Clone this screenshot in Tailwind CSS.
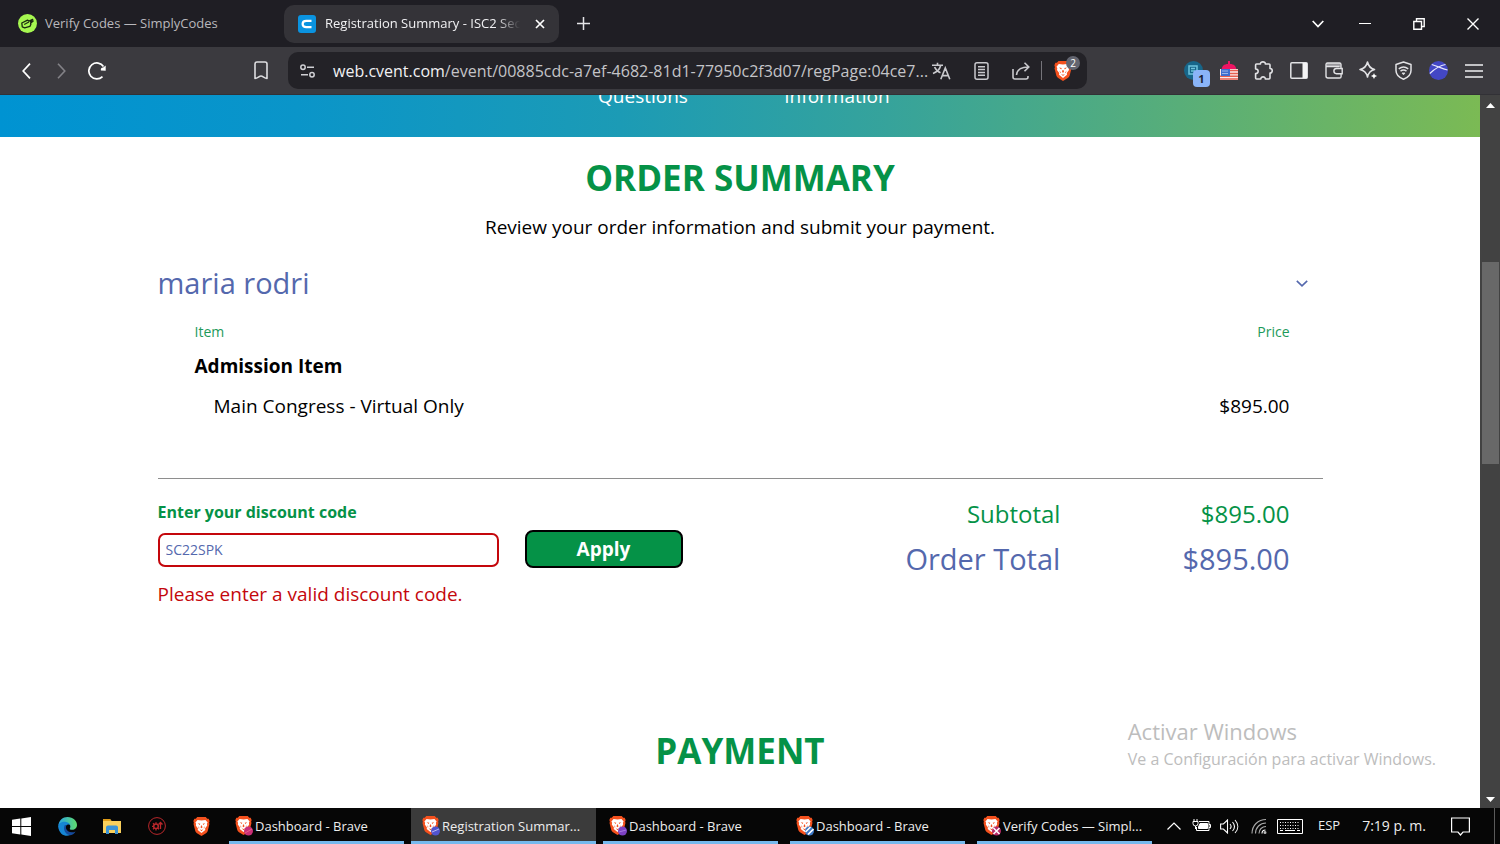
<!DOCTYPE html>
<html lang="en">
<head>
  <meta charset="UTF-8">
  <meta name="viewport" content="width=device-width, initial-scale=1.0">
  <title>Registration Summary - ISC2 Security Congress</title>
  <script src="https://cdn.jsdelivr.net/npm/@tailwindcss/browser@4"></script>
</head>
<body class="h-screen flex flex-col overflow-hidden bg-white font-['Open_Sans',sans-serif]">

  <!-- Shared icons -->
  <svg class="hidden">
    <symbol id="brave" viewBox="0 0 18 20">
      <path d="M4.500 0h9l1.600 1.800 1.500-.1 1 2.500-.6 2 .5 1-1.900 7.500c-.3 1-1 1.800-1.800 2.400L9 20l-4.800-2.900c-.8-.6-1.500-1.400-1.800-2.400L.5 7.200l.5-1-.6-2 1-2.500 1.500.1z" fill="#f4511e"/>
      <path d="M4.800 3 9 3.600l4.200-.6 2.300 2.700-.8 1.500.3 1.800-2.200 3 .2 1.800L9 17l-4-3.200.2-1.800L3 9l.3-1.800-.8-1.500z" fill="#fff"/>
      <path d="m5 6.500 2.700.6-.5 1.300zM13 6.500l-2.700.6.5 1.300zM8.500 9h1l.5 2-1 .8-1-.8zM5.500 9.500l1.300 2-.6.800zM12.500 9.500l-1.300 2 .6.800zM7 13l2 .8 2-.8-2 1.900z" fill="#f4511e"/>
    </symbol>
  </svg>

  <!-- Tabs -->
  <header class="h-[47px] shrink-0 bg-[#1f1e24] flex items-center text-[13px]">
    <a href="#" class="w-[284px] flex items-center gap-2 pl-[18px] text-[#b9b8bc]">
      <svg class="size-[19px]" viewBox="0 0 20 20">
        <circle cx="10" cy="10" r="10" fill="#a6f750"/>
        <path d="M4 9.500 10 6.500l1.500 1 4-1.800-2.300 2.500 2.800-.8-2.800 2.300.3 1.300-1 2-5.500 1.500-2.500-1z" fill="none" stroke="#1c2a12" stroke-width="1.400" stroke-linejoin="round"/>
        <path d="m6.500 11 5-2.500" stroke="#1c2a12" stroke-width="1.200"/>
      </svg>
      <span>Verify Codes — SimplyCodes</span>
    </a>
    <div class="w-[275px] h-[38px] rounded-[10px] bg-[#343338] flex items-center pl-[14px] pr-2 text-[#f1f1f3]">
      <svg class="size-[18px] shrink-0" viewBox="0 0 18 18">
        <rect width="18" height="18" rx="3" fill="#0a93e0"/>
        <path d="M13.500 5.800H8.200C6 5.800 4.600 7 4.600 9s1.400 3.200 3.600 3.200h5.300" fill="none" stroke="#fff" stroke-width="2.200"/>
      </svg>
      <span class="ml-[9px] w-[195px] overflow-hidden whitespace-nowrap [mask-image:linear-gradient(to_right,black_88%,transparent)]">Registration Summary - ISC2 Security</span>
      <button aria-label="Close tab" class="ml-auto size-[22px] flex items-center justify-center">
        <svg class="size-[10px]" viewBox="0 0 10 10"><path d="m1 1 8 8M9 1 1 9" stroke="#fff" stroke-width="1.700"/></svg>
      </button>
    </div>
    <button aria-label="New tab" class="ml-3 size-6 flex items-center justify-center">
      <svg class="size-[13px]" viewBox="0 0 13 13"><path d="M6.500 0v13M0 6.500h13" stroke="#e4e4e7" stroke-width="1.500"/></svg>
    </button>
    <div class="ml-auto flex items-center">
      <button aria-label="Search tabs" class="w-10 h-8 flex items-center justify-center">
        <svg class="w-3 h-2" viewBox="0 0 12 8"><path d="m.7 1 5.300 5.500L11.300 1" fill="none" stroke="#fff" stroke-width="1.700"/></svg>
      </button>
      <button aria-label="Minimize" class="w-[54px] h-8 flex items-center justify-center">
        <svg class="w-3 h-2" viewBox="0 0 12 8"><path d="M0 3.500h12" stroke="#fff"/></svg>
      </button>
      <button aria-label="Restore" class="w-[54px] h-8 flex items-center justify-center">
        <svg class="size-3" viewBox="0 0 12 12"><path d="M.8 3.500h7.700v7.700H.8zM3.500 3.500V.8h7.700v7.700H8.500" fill="none" stroke="#fff" stroke-width="1.400"/></svg>
      </button>
      <button aria-label="Close window" class="w-[54px] h-8 flex items-center justify-center">
        <svg class="size-3" viewBox="0 0 12 12"><path d="m.5.5 11 11m0-11-11 11" stroke="#fff" stroke-width="1.400"/></svg>
      </button>
    </div>
  </header>

  <!-- Toolbar -->
  <div class="h-12 shrink-0 bg-[#3b3a3f] border-b border-[#323136] flex items-center pl-[9px] pr-[9px]">
    <button aria-label="Back" class="w-[35px] h-8 flex items-center justify-center">
      <svg class="w-[9px] h-4" viewBox="0 0 9 16"><path d="M8 .7 1.200 8 8 15.300" fill="none" stroke="#fff" stroke-width="1.700"/></svg>
    </button>
    <button aria-label="Forward" class="w-[35px] h-8 flex items-center justify-center">
      <svg class="w-[9px] h-4" viewBox="0 0 9 16"><path d="M1 .7 7.800 8 1 15.300" fill="none" stroke="#838287" stroke-width="1.600"/></svg>
    </button>
    <button aria-label="Reload" class="w-[35px] h-8 flex items-center justify-center">
      <svg class="size-[18px]" viewBox="0 0 18 18"><path d="M15.500 4.500A8 8 0 1 0 14.500 14.600" fill="none" stroke="#fff" stroke-width="1.700"/><path d="M17.700 3.500v5.300l-4.800-.4c-.4-2 .6-3 2.300-2.900z" fill="#fff"/></svg>
    </button>
    <button aria-label="Bookmark this page" class="ml-[129px] w-[35px] h-8 flex items-center justify-center">
      <svg class="w-[14px] h-[19px]" viewBox="0 0 14 19"><path d="M1 3a2 2 0 0 1 2-2h8a2 2 0 0 1 2 2v14.500c-2.500-.2-4.200-2.500-6-2.500s-3.500 2.300-6 2.500z" fill="none" stroke="#dddde0" stroke-width="1.600" stroke-linejoin="round"/></svg>
    </button>

    <div class="ml-[10px] flex-1 max-w-[799px] h-[37px] rounded-[10px] bg-[#232227] flex items-center pl-3 pr-[6px] text-[#c4c4c8]">
      <button aria-label="Site information" class="shrink-0">
        <svg class="w-[15px] h-[14px]" viewBox="0 0 15 14" fill="none" stroke="#d0d0d4" stroke-width="1.500"><circle cx="3" cy="3.200" r="2.200"/><path d="M7 3.200h7M1 10.800h7"/><circle cx="12" cy="10.800" r="2.200"/></svg>
      </button>
      <a href="#" class="ml-[18px] flex-1 min-w-0 text-base whitespace-nowrap"><span class="text-[#f1f1f3]">web.cvent.com</span>/event/00885cdc-a7ef-4682-81d1-77950c2f3d07/regPage:04ce7...</a>
      <button aria-label="Translate" class="w-10 shrink-0 flex justify-center">
        <svg class="w-[19px] h-[18px]" viewBox="0 0 19 18" fill="none" stroke="#c9c9cd" stroke-width="1.600"><path d="M0 3.300h11M5.500.8v2.500M8.700 3.500C7.800 7 4.800 10 1 11.500M2.600 5C3.800 8 6 9.800 8.500 10.800M8.800 17.300 13.300 6l4.500 11.300M10.300 13.600h6"/></svg>
      </button>
      <button aria-label="Reader mode" class="w-10 shrink-0 flex justify-center">
        <svg class="w-[15px] h-[18px]" viewBox="0 0 15 18" fill="none" stroke="#c9c9cd" stroke-width="1.500"><rect x="1" y=".8" width="13" height="16.400" rx="2"/><path d="M4 4.800h7M4 7.600h7M4 10.400h7M4 13.200h7"/></svg>
      </button>
      <button aria-label="Share" class="w-10 shrink-0 flex justify-center">
        <svg class="w-[18px] h-[18px]" viewBox="0 0 18 18" fill="none" stroke="#c9c9cd" stroke-width="1.600"><path d="M1 7v8a2 2 0 0 0 2 2h11a2 2 0 0 0 2-2v-1M4.500 13c.4-5 3.500-8 12-8M12.500.8 16.800 5l-4.300 4.200"/></svg>
      </button>
      <span class="w-px shrink-0 h-[19px] bg-[#75747a]"></span>
      <button aria-label="Brave Shields" class="relative shrink-0 ml-3 w-[27px] h-[22px]">
        <svg class="w-[18px] h-[22px]"><use href="#brave"/></svg>
        <span class="absolute -top-1 left-3 size-[14px] rounded-full bg-[#636570] text-white text-[10px] leading-[14px] text-center">2</span>
      </button>
    </div>

    <!-- Extensions -->
    <div class="ml-auto flex items-center">
      <button aria-label="Reader extension" class="relative w-[35px] h-8 flex items-center justify-center">
        <svg class="size-[19px]" viewBox="0 0 19 19"><circle cx="9.500" cy="9.500" r="9.500" fill="#17668a"/><path d="M5 5h8v8H5zM7 7.500h4M7 10h4" fill="none" stroke="#6fc3dd" stroke-width="1.500"/></svg>
        <span class="absolute left-[17px] top-[15px] size-[17px] rounded-[4px] bg-[#8ab4f8] text-[#1b2333] text-[11px] font-bold leading-[17px] text-center">1</span>
      </button>
      <button aria-label="US proxy extension" class="w-[35px] h-8 flex items-center justify-center">
        <svg class="w-[18px] h-5" viewBox="0 0 18 20"><path d="M8 0h2v3c4 0 6 2 6.500 6h-15C2 5 4 3 8 3z" fill="#ee1463"/><path d="M0 8h18v11H0z" fill="#fbe9e9"/><path d="M0 18h18M9 9.500h9M9 12.500h9M0 15.300h18" stroke="#e6604f" stroke-width="1.400"/><path d="M1 8h9v7H1z" fill="#3f6fd0"/><path d="M2.500 10h6M2.500 12.500h6" stroke="#fff" stroke-dasharray="1 1"/></svg>
      </button>
      <button aria-label="Extensions" class="w-[35px] h-8 flex items-center justify-center">
        <svg class="size-[19px]" viewBox="0 0 19 19"><path d="M3 3h3.500c-.4-2.800 5.200-2.800 4.800 0H15a1 1 0 0 1 1 1v3.500c3-.2 3 4.700 0 4.500v5a1 1 0 0 1-1 1h-3.700c.2-2.800-4.600-2.800-4.500 0H2.600a1 1 0 0 1-1-1v-4.500c3.400.2 3.400-4.700 0-4.500V4A1.200 1.200 0 0 1 3 3z" fill="none" stroke="#e2e2e5" stroke-width="1.600" stroke-linejoin="round"/></svg>
      </button>
      <button aria-label="Side panel" class="w-[35px] h-8 flex items-center justify-center">
        <svg class="w-[18px] h-[17px]" viewBox="0 0 18 17"><rect x=".8" y=".8" width="16.400" height="15.400" rx="1" fill="none" stroke="#e2e2e5" stroke-width="1.500"/><path d="M12.500 1H17v15h-4.500z" fill="#f4f4f5"/></svg>
      </button>
      <button aria-label="Wallet" class="w-[35px] h-8 flex items-center justify-center">
        <svg class="w-[18px] h-[17px]" viewBox="0 0 18 17"><path d="M2 1h13l1 4H1z" fill="#97969b"/><path d="M16 6V2.500A1.600 1.600 0 0 0 14.500 1h-12A1.600 1.600 0 0 0 1 2.500V14a2 2 0 0 0 2 2h11.500a1.600 1.600 0 0 0 1.600-1.600V12M1 4.500h13.500M17.200 6.500h-5.700a2.500 2.500 0 0 0 0 5.200h5.700z" fill="none" stroke="#e2e2e5" stroke-width="1.400"/></svg>
      </button>
      <button aria-label="Leo AI" class="w-[35px] h-8 flex items-center justify-center">
        <svg class="size-[19px]" viewBox="0 0 19 19"><path d="M8.500 1c1 4.500 2.800 6.500 7 7.500-4.200 1-6 3-7 7.500-1-4.500-2.800-6.500-7.500-7.500C5.700 7.500 7.500 5.500 8.500 1z" fill="none" stroke="#e2e2e5" stroke-width="1.600" stroke-linejoin="round"/><path d="M15 12c.5 2 1.200 2.500 3.200 3-2 .5-2.700 1.200-3.200 3.200-.5-2-1.200-2.700-3.200-3.200 2-.5 2.700-1 3.200-3z" fill="#fff"/></svg>
      </button>
      <button aria-label="VPN" class="w-[35px] h-8 flex items-center justify-center">
        <svg class="w-[17px] h-[19px]" viewBox="0 0 17 19" fill="none" stroke="#e2e2e5" stroke-width="1.500"><path d="m8.500 1 7.500 2.500v6c0 4-3 7-7.500 8.700C4 16.500 1 13.500 1 9.500v-6z" stroke-linejoin="round"/><path d="M3.800 7.800c3-2.400 6.400-2.400 9.400 0M5.500 10.200c2-1.500 4-1.500 6 0"/><path d="m7 12 1.500 1.800L10 12z" fill="#e2e2e5" stroke-width=".8"/></svg>
      </button>
      <button aria-label="Profile" class="w-[35px] h-8 flex items-center justify-center">
        <svg class="size-[19px]" viewBox="0 0 19 19"><circle cx="9.500" cy="9.500" r="9.500" fill="#4347c4"/><path d="M.8 12.500C5 8.500 10 4.500 16.500 3.500M2.800 3.500c5 1.500 10 4 15.700 5.500" fill="none" stroke="#e8e8fb" stroke-width="1.200"/></svg>
      </button>
      <button aria-label="Menu" class="w-[35px] h-8 flex items-center justify-center">
        <svg class="w-[18px] h-[14px]" viewBox="0 0 18 14"><path d="M0 1h18M0 7h18M0 13h18" stroke="#f0f0f2" stroke-width="1.600"/></svg>
      </button>
    </div>
  </div>

  <!-- Web page -->
  <div class="relative flex-1 min-h-0 flex">
    <div class="flex-1 overflow-hidden text-black">
      <nav class="h-[42px] overflow-hidden bg-[linear-gradient(to_right,#0093d2_0%,#0a95c9_20%,#1c9bb5_42%,#36a39b_60%,#55ad7c_78%,#7bba54_100%)]">
        <div class="-mt-[13px] flex justify-center text-white text-[19px] leading-7">
          <a href="#" class="w-[194px] text-center">Questions</a>
          <a href="#" class="w-[194px] text-center">Information</a>
        </div>
      </nav>

      <main class="max-w-[1165px] mx-auto pt-[17px]">
        <h1 class="text-center text-[35px] leading-[48px] font-bold text-[#059247]">ORDER SUMMARY</h1>
        <p class="mt-[11px] text-center text-[19px] leading-7">Review your order information and submit your payment.</p>

        <div class="mt-[22px] flex items-center justify-between pr-[15px]">
          <h2 class="text-[29px] leading-10 text-[#5468ad]">maria rodri</h2>
          <button aria-label="Toggle order details">
            <svg class="w-3 h-[7px]" viewBox="0 0 12 7"><path d="m.8.8 5.200 5 5.200-5" fill="none" stroke="#5468ad" stroke-width="1.600"/></svg>
          </button>
        </div>

        <table class="mt-[19px] w-full">
          <thead>
            <tr class="text-sm text-[#1d9a5a]">
              <th scope="col" class="pl-[37px] text-left font-normal">Item</th>
              <th scope="col" class="pr-[33px] text-right font-normal">Price</th>
            </tr>
          </thead>
          <tbody class="text-[19px] leading-7">
            <tr>
              <th scope="rowgroup" colspan="2" class="pt-[10px] pl-[37px] text-left font-bold">Admission Item</th>
            </tr>
            <tr>
              <td class="pt-3 pl-14">Main Congress - Virtual Only</td>
              <td class="pt-3 pr-[33px] text-right">$895.00</td>
            </tr>
          </tbody>
        </table>

        <div class="mt-[58px] border-t border-[#8e8e8e] flex justify-between">
          <!-- Discount code -->
          <form class="pt-[21px]">
            <label for="discount" class="block font-bold text-base text-[#059247]">Enter your discount code</label>
            <div class="mt-[6px] flex items-center">
              <input type="text" id="discount" name="discount" value="SC22SPK" aria-describedby="discount-error" class="mt-[2px] w-[341px] h-[34px] border-2 border-[#c4070c] rounded-[7px] px-[6px] pb-[2px] text-sm text-[#5468ad]">
              <button type="button" class="ml-[26px] w-[158px] h-[38px] border-2 border-black rounded-lg bg-[#059247] text-white text-[19px] leading-7 font-bold">Apply</button>
            </div>
            <p id="discount-error" class="mt-3 text-[19px] leading-7 text-[#c4070c]">Please enter a valid discount code.</p>
          </form>

          <!-- Totals -->
          <dl class="pt-[19px] pr-[33px] grid grid-cols-[auto_auto] content-start gap-y-[9px] gap-x-[122px] text-right">
            <dt class="text-2xl leading-8 text-[#059247]">Subtotal</dt>
            <dd class="text-2xl leading-8 text-[#059247]">$895.00</dd>
            <dt class="text-[29px] leading-10 text-[#5468ad]">Order Total</dt>
            <dd class="text-[29px] leading-10 text-[#5468ad]">$895.00</dd>
          </dl>
        </div>

        <h1 class="mt-[119px] text-center text-[35px] leading-[48px] font-bold text-[#059247]">PAYMENT</h1>
      </main>
    </div>

    <!-- Scrollbar -->
    <div class="w-5 bg-[#424242] flex flex-col items-center">
      <svg class="mt-2 w-[9px] h-[5px]" viewBox="0 0 9 5"><path d="M0 5 4.500 0 9 5z" fill="#fff"/></svg>
      <div class="mt-[154px] w-[17px] h-[202px] bg-[#686868]"></div>
      <svg class="mt-auto mb-[6px] w-[9px] h-[5px]" viewBox="0 0 9 5"><path d="M0 0 4.500 5 9 0z" fill="#fff"/></svg>
    </div>

    <!-- Activation watermark -->
    <div class="absolute right-[64px] bottom-[37px] text-[#bdbdbd] pointer-events-none">
      <p class="text-[22px] leading-8">Activar Windows</p>
      <p class="text-base leading-6">Ve a Configuración para activar Windows.</p>
    </div>
  </div>

  <!-- Taskbar -->
  <footer class="h-9 shrink-0 bg-[#060606] flex items-center text-[13px] text-[#ededed]">
    <button aria-label="Start" class="w-[42px] flex justify-center">
      <svg class="size-[19px]" viewBox="0 0 19 19"><path d="M0 2.700 8.300 1.500V9H0zM9.300 1.400 19 0v9H9.300zM0 10h8.300v7.500L0 16.300zM9.300 10H19v9l-9.700-1.400z" fill="#fff"/></svg>
    </button>
    <button aria-label="Edge" class="w-[50px] flex justify-center">
      <svg class="size-[19px]" viewBox="0 0 20 20">
        <defs>
          <linearGradient id="edgeTop"><stop stop-color="#2aa4e4"/><stop offset="1" stop-color="#5fdc6c"/></linearGradient>
        </defs>
        <path d="M.3 9C1 3.500 5 0 10 0c6 0 10 4 10 8.500 0 3-2.300 5-5 5-2 0-3-.7-2.500-1.500C14 9 12 6.500 9 6.500 5 6.500 2 8 .3 9z" fill="url(#edgeTop)"/>
        <path d="M.1 10C.5 6.500 4 4.800 7.500 5c3 .2 5 2 5.400 3.500C10 7 7 9 7.500 12.500c.5 3 4 5 8 4.400C12 22 1.500 21 .1 10z" fill="#1686d4"/>
        <path d="M7 8.700c-2 5 1 10 6 10.500 2.500-.3 4.500-2 5.500-4-4 2-9 .8-10-3-.3-1.500 0-2.700.6-3.700z" fill="#144a9c"/>
      </svg>
    </button>
    <button aria-label="File Explorer" class="w-10 flex justify-center">
      <svg class="w-[18px] h-4" viewBox="0 0 18 16"><path d="M0 1h7l1.500 2H18v12H0z" fill="#f9cf5b"/><path d="M0 1h7l1.500 2H0z" fill="#e09c17"/><path d="M3 16V9.500a2 2 0 0 1 2-2h8a2 2 0 0 1 2 2V16h-3v-4H6v4z" fill="#3b93d6"/></svg>
    </button>
    <button aria-label="Utility" class="w-[49px] flex justify-center">
      <svg class="size-[18px]" viewBox="0 0 18 18" fill="none" stroke="#b9272b"><circle cx="9" cy="9" r="8.400"/><circle cx="8" cy="9.300" r="2.300" stroke-width="1.500"/><path d="M8 5.200v1.500M8 12v1.500M4 9.300h1.500M5 6.300l1.300 1.300M5 12.300l1.300-1.300M11 12.300 9.700 11M12.500 12V5.800M10.500 7.500l2-2 2 2" stroke-width="1.300"/></svg>
    </button>
    <button aria-label="Brave" class="w-10 flex justify-center">
      <svg class="w-[17px] h-[19px]"><use href="#brave"/></svg>
    </button>

    <div class="ml-[3px] flex-1 max-w-[933px] h-full flex gap-[2px]">
      <button class="relative flex-1 min-w-0 flex items-center pl-[11px] after:absolute after:inset-x-[5px] after:bottom-0 after:h-[3px] after:bg-[#76b9ed]">
        <svg class="w-[18px] h-5 shrink-0" viewBox="0 0 18 20"><use href="#brave" width="17" height="19"/><circle cx="13.500" cy="15" r="4.500" fill="#c92f78"/><path d="m10 17 7-4" stroke="#e8618a"/></svg>
        <span class="ml-[2px] mt-[2px] truncate">Dashboard - Brave</span>
      </button>
      <button class="relative flex-1 min-w-0 flex items-center pl-[11px] bg-[#3b3b3b] after:absolute after:inset-x-0 after:bottom-0 after:h-[3px] after:bg-[#76b9ed]">
        <svg class="w-[18px] h-5 shrink-0" viewBox="0 0 18 20"><use href="#brave" width="17" height="19"/><circle cx="13.500" cy="15" r="4.500" fill="#5254cf"/><path d="m10 16 7-3" stroke="#b9b9f3"/></svg>
        <span class="ml-[2px] mt-[2px] whitespace-nowrap">Registration Summar...</span>
      </button>
      <button class="relative flex-1 min-w-0 flex items-center pl-[11px] after:absolute after:inset-x-[5px] after:bottom-0 after:h-[3px] after:bg-[#76b9ed]">
        <svg class="w-[18px] h-5 shrink-0" viewBox="0 0 18 20"><use href="#brave" width="17" height="19"/><circle cx="13.500" cy="15" r="4.500" fill="#7d41c4"/><path d="m10 16 7-2" stroke="#a97be0"/></svg>
        <span class="ml-[2px] mt-[2px] truncate">Dashboard - Brave</span>
      </button>
      <button class="relative flex-1 min-w-0 flex items-center pl-[11px] after:absolute after:inset-x-[5px] after:bottom-0 after:h-[3px] after:bg-[#76b9ed]">
        <svg class="w-[18px] h-5 shrink-0" viewBox="0 0 18 20"><use href="#brave" width="17" height="19"/><circle cx="13.500" cy="15" r="4.500" fill="#3b78c8"/><path d="m9.500 16 5-5M12 18.500l5.500-5.500" stroke="#fff" stroke-width="1.600"/></svg>
        <span class="ml-[2px] mt-[2px] truncate">Dashboard - Brave</span>
      </button>
      <button class="relative flex-1 min-w-0 flex items-center pl-[11px] after:absolute after:inset-x-[5px] after:bottom-0 after:h-[3px] after:bg-[#76b9ed]">
        <svg class="w-[18px] h-5 shrink-0" viewBox="0 0 18 20"><use href="#brave" width="17" height="19"/><circle cx="13.500" cy="15" r="4.500" fill="#b62a68"/><path d="m10.500 12 6 6M16.500 12l-6 6" stroke="#fff" stroke-width="1.500"/></svg>
        <span class="ml-[2px] mt-[2px] whitespace-nowrap">Verify Codes — Simpl...</span>
      </button>
    </div>

    <!-- System tray -->
    <div class="ml-auto h-full flex items-center">
      <button aria-label="Show hidden icons" class="w-7 flex justify-center">
        <svg class="w-[14px] h-2" viewBox="0 0 14 8"><path d="M.5 7.500 7 1l6.500 6.500" fill="none" stroke="#fff" stroke-width="1.200"/></svg>
      </button>
      <button aria-label="Battery" class="w-7 flex justify-center">
        <svg class="w-[19px] h-[14px]" viewBox="0 0 19 14" fill="none" stroke="#fff"><path d="M7 2.500h10v9H4.500V8M17 5.500h1.500v3H17"/><path d="M8 4.500h7.500v5H6.500V8z" fill="#fff"/><path d="M1 2.500h5v2a2.500 2.500 0 0 1-5 0zM2 0v2.500M5 0v2.500M3.500 7v3"/></svg>
      </button>
      <button aria-label="Volume" class="w-7 flex justify-center">
        <svg class="w-[19px] h-[15px]" viewBox="0 0 19 15" fill="none" stroke="#fff" stroke-width="1.100"><path d="M.6 5h2.800L7.500 1v13L3.400 10H.6zM10 5c1.300 1.500 1.300 3.500 0 5M12.500 3c2.500 2.800 2.500 6.200 0 9M15 1c3.700 4 3.700 9 0 13"/></svg>
      </button>
      <button aria-label="Network" class="w-[30px] flex justify-center">
        <svg class="size-4" viewBox="0 0 16 16" fill="none" stroke="#aaa" stroke-width="1.100"><path d="M1 15.500C1 7.500 7 1.500 15 1.500M4.500 15.500c0-6 4.500-10.500 10.500-10.500M8 15.500c0-4 3-7 7-7"/><path d="M11 15.500c0-2 1.500-3.500 3.500-3.500" stroke="#fff"/><circle cx="14" cy="14.500" r="1" fill="#fff"/></svg>
      </button>
      <button aria-label="Touch keyboard" class="w-8 flex justify-center">
        <svg class="w-[26px] h-[15px]" viewBox="0 0 26 15" fill="none" stroke="#fff"><path d="M.5.500h25v14H.5z"/><path d="M3 3.500h20M3 6.500h20M3 9.500h20" stroke-dasharray="1 1.500"/><path d="M3 11.500h3M8 11.500h10M20 11.500h3"/></svg>
      </button>
      <button class="ml-3 text-[13px]">ESP</button>
      <time class="ml-[22px] text-sm">7:19 p. m.</time>
      <button aria-label="Notifications" class="ml-[25px]">
        <svg class="w-[19px] h-[19px]" viewBox="0 0 19 19"><path d="M.6 1h17.800v14H12l-2.500 3L7 15H.6z" fill="none" stroke="#fff" stroke-width="1.200"/></svg>
      </button>
      <span class="ml-6 mr-[5px] w-px h-full bg-[#5a5a5a]"></span>
    </div>
  </footer>
</body>
</html>
